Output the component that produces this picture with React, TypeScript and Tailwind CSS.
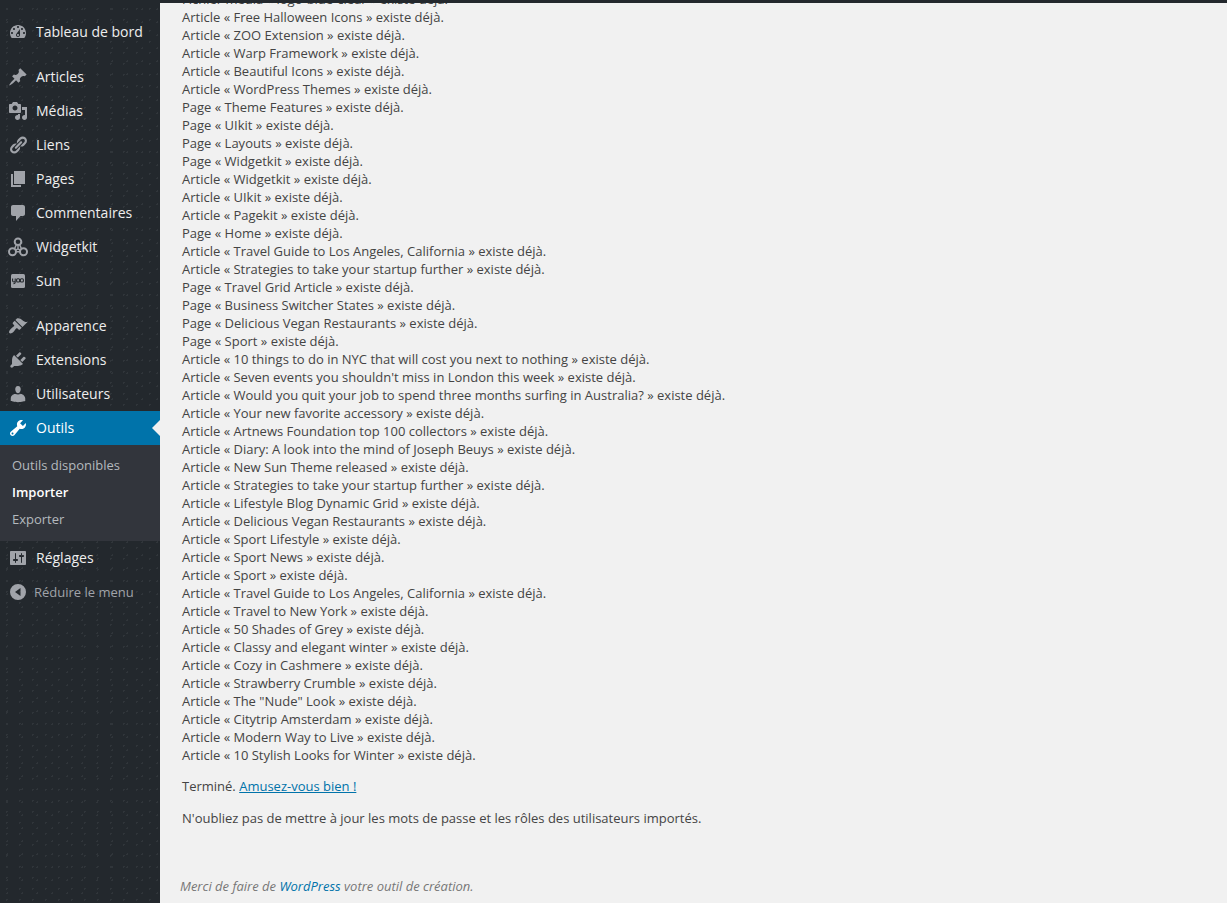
import React from "react";

type MenuItem = {
  label: string;
  icon: React.ReactNode;
  current?: boolean;
  separator?: boolean;
};

const Icon = ({ d }: { d: string }) => (
  <svg viewBox="0 0 20 20" className="size-full" fill="currentColor" fillRule="evenodd" aria-hidden="true">
    <path d={d} />
  </svg>
);

const menu: MenuItem[] = [
  {
    label: "Tableau de bord",
    icon: (
      <Icon d="M3.76 16h12.48c1.1-1.37 1.76-3.11 1.76-5 0-4.42-3.58-8-8-8s-8 3.58-8 8c0 1.89.66 3.63 1.76 5zM10 4c.55 0 1 .45 1 1s-.45 1-1 1-1-.45-1-1 .45-1 1-1zM6 6c.55 0 1 .45 1 1s-.45 1-1 1-1-.45-1-1 .45-1 1-1zm8 0c.55 0 1 .45 1 1s-.45 1-1 1-1-.45-1-1 .45-1 1-1zm-5.37 5.55L12 7v6c0 1.1-.9 2-2 2s-2-.9-2-2c0-.57.24-1.08.63-1.45zM4 10c.55 0 1 .45 1 1s-.45 1-1 1-1-.45-1-1 .45-1 1-1zm12 0c.55 0 1 .45 1 1s-.45 1-1 1-1-.45-1-1 .45-1 1-1zm-5 3c0-.55-.45-1-1-1s-1 .45-1 1 .45 1 1 1 1-.45 1-1z" />
    ),
  },
  {
    label: "Articles",
    separator: true,
    icon: (
      <Icon d="M10.44 3.02l1.82-1.82 6.36 6.35-1.83 1.82c-1.05-.68-2.48-.57-3.41.36l-.75.75c-.92.93-1.04 2.35-.35 3.41l-1.83 1.82-2.41-2.41-2.8 2.79c-.42.42-3.38 2.71-3.8 2.29s1.86-3.39 2.28-3.81l2.79-2.79L4.1 9.36l1.83-1.82c1.05.69 2.48.57 3.4-.36l.75-.75c.93-.92 1.05-2.35.36-3.41z" />
    ),
  },
  {
    label: "Médias",
    icon: (
      <Icon d="M13 11V4c0-.55-.45-1-1-1h-1.67L9 1H5L3.67 3H2c-.55 0-1 .45-1 1v7c0 .55.45 1 1 1h10c.55 0 1-.45 1-1zM7 4.5c1.38 0 2.5 1.12 2.5 2.5S8.38 9.5 7 9.5 4.5 8.38 4.5 7 5.62 4.5 7 4.5zM14 6h5v10.5c0 1.38-1.12 2.5-2.5 2.5S14 17.88 14 16.5s1.12-2.5 2.5-2.5c.17 0 .34.02.5.05V9h-3V6zm-4 8.05V13h2v3.5c0 1.38-1.12 2.5-2.5 2.5S7 17.88 7 16.5 8.12 14 9.5 14c.17 0 .34.02.5.05z" />
    ),
  },
  {
    label: "Liens",
    icon: (
      <Icon d="M17.74 2.76c1.68 1.69 1.68 4.41 0 6.1l-1.53 1.52c-1.12 1.12-2.7 1.47-4.14 1.09l2.62-2.61.76-.77.76-.76c.84-.84.84-2.2 0-3.04-.84-.85-2.2-.85-3.04 0l-.77.76-3.38 3.38c-.37-1.44-.02-3.02 1.1-4.14l1.52-1.53c1.69-1.68 4.42-1.68 6.1 0zM8.59 13.43l5.34-5.34c.42-.42.42-1.1 0-1.52-.44-.43-1.13-.39-1.53 0l-5.33 5.34c-.42.42-.42 1.1 0 1.52.44.43 1.13.39 1.52 0zm-.76 2.29l4.14-4.15c.38 1.44.03 3.02-1.09 4.14l-1.52 1.53c-1.69 1.68-4.41 1.68-6.1 0-1.68-1.68-1.68-4.42 0-6.1l1.53-1.52c1.12-1.12 2.7-1.47 4.14-1.1l-4.14 4.15c-.85.84-.85 2.2 0 3.05.84.84 2.2.84 3.04 0z" />
    ),
  },
  { label: "Pages", icon: <Icon d="M6 15V2h11v13H6zm-1 1h8v2H3V5h2v11z" /> },
  {
    label: "Commentaires",
    icon: (
      <Icon d="M5 2h10c1.1 0 2 .9 2 2v7c0 1.1-.9 2-2 2h-2.5l-4.5 5v-5H5c-1.1 0-2-.9-2-2V4c0-1.1.9-2 2-2z" />
    ),
  },
  {
    label: "Widgetkit",
    icon: (
      <svg viewBox="0 0 20 20" className="size-full" fill="none" stroke="currentColor" strokeWidth="2" aria-hidden="true">
        <circle cx="10" cy="4.8" r="3.3" />
        <circle cx="4.5" cy="14.8" r="3.5" />
        <circle cx="15.5" cy="14.8" r="3.5" />
        <path d="M8.2 8 6.6 11.6M11.8 8l1.6 3.6M8 14.8h4M10 8.4v3.4l-2.6 1.6M10 11.8l2.6 1.6" strokeWidth="1.4" />
      </svg>
    ),
  },
  {
    label: "Sun",
    icon: (
      <svg viewBox="0 0 20 20" className="size-full" fill="none" aria-hidden="true">
        <rect x="3" y="3" width="14" height="14" rx="1.5" fill="currentColor" />
        <path
          d="M4.6 7.4v2.4q0 1.2 1.3 1.2t1.3-1.2V7.4M7.2 9.8v1.8q0 1.2-1.8 1.2M9.6 7.8h1a1 1 0 0 1 1 1v1.2a1 1 0 0 1-1 1h-1a1 1 0 0 1-1-1V8.8a1 1 0 0 1 1-1zM13.4 7.8h1a1 1 0 0 1 1 1v1.2a1 1 0 0 1-1 1h-1a1 1 0 0 1-1-1V8.8a1 1 0 0 1 1-1z"
          stroke="#23282d"
          strokeWidth="1.1"
        />
      </svg>
    ),
  },
  {
    label: "Apparence",
    separator: true,
    icon: (
      <Icon d="M14.48 11.06L7.41 3.99l1.5-1.5c.5-.56 2.3-.47 3.51.32 1.21.8 1.43 1.28 2.91 2.1 1.18.64 2.45 1.26 4.45.85zm-.71.71L6.7 4.7 4.93 6.47c-.39.39-.39 1.02 0 1.41l1.06 1.06c.39.39.39 1.03 0 1.42-.6.6-1.43 1.11-2.21 1.69-.35.26-.7.53-1.01.84C1.43 14.23.4 16.08 1.4 17.07c.99 1 2.84-.03 4.18-1.36.31-.31.58-.66.85-1.02.57-.78 1.08-1.61 1.69-2.21.39-.39 1.02-.39 1.41 0l1.06 1.06c.39.39 1.02.39 1.41 0z" />
    ),
  },
  {
    label: "Extensions",
    icon: (
      <Icon d="M13.11 4.36L9.87 7.6 8 5.73l3.24-3.24c.35-.34 1.05-.2 1.56.32.52.51.66 1.21.31 1.55zm-8 1.77l.91-1.12 9.01 9.01-1.19.84c-.71.71-2.63 1.16-3.82 1.16H6.14L4.9 17.26c-.59.59-1.54.59-2.12 0-.59-.58-.59-1.53 0-2.12l1.24-1.24v-3.88c0-1.13.4-3.19 1.09-3.89zm7.26 3.97l3.24-3.24c.34-.35 1.04-.21 1.55.31.52.51.66 1.21.31 1.55l-3.24 3.25z" />
    ),
  },
  {
    label: "Utilisateurs",
    icon: (
      <Icon d="M10 9.25c-2.27 0-2.73-3.44-2.73-3.44C7 4.02 7.82 2 9.97 2c2.16 0 2.98 2.02 2.71 3.81 0 0-.41 3.44-2.68 3.44zm0 1.2L12.72 10c2.39 0 4.52 2.33 4.52 4.53v2.49s-3.65 1.13-7.24 1.13c-3.65 0-7.24-1.13-7.24-1.13v-2.49c0-2.25 1.94-4.48 4.47-4.48z" />
    ),
  },
  {
    label: "Outils",
    current: true,
    icon: (
      <Icon d="M16.68 9.77c-1.34 1.34-3.3 1.67-4.95.99l-5.41 6.52c-.99.99-2.59.99-3.58 0s-.99-2.59 0-3.57l6.52-5.42c-.68-1.65-.35-3.61.99-4.95 1.28-1.28 3.12-1.62 4.72-1.06l-2.89 2.89 2.82 2.82 2.86-2.87c.53 1.58.18 3.39-1.08 4.65zM3.81 16.21c.4.39 1.04.39 1.43 0 .4-.4.4-1.04 0-1.43-.39-.4-1.03-.4-1.43 0-.39.39-.39 1.03 0 1.43z" />
    ),
  },
  {
    label: "Réglages",
    icon: (
      <Icon d="M18 16V4c0-.55-.45-1-1-1H3c-.55 0-1 .45-1 1v12c0 .55.45 1 1 1h14c.55 0 1-.45 1-1zM8 11h1c.55 0 1 .45 1 1s-.45 1-1 1H8v1.5c0 .28-.22.5-.5.5s-.5-.22-.5-.5V13H6c-.55 0-1-.45-1-1s.45-1 1-1h1V5.5c0-.28.22-.5.5-.5s.5.22.5.5V11zm5-2h-1c-.55 0-1-.45-1-1s.45-1 1-1h1V5.5c0-.28.22-.5.5-.5s.5.22.5.5V7h1c.55 0 1 .45 1 1s-.45 1-1 1h-1v5.5c0 .28-.22.5-.5.5s-.5-.22-.5-.5V9z" />
    ),
  },
];

const submenu = ["Outils disponibles", "Importer", "Exporter"];

const imported: [string, string][] = [
  ["Fichier média", "logo-blue-clear"],
  ["Article", "Free Halloween Icons"],
  ["Article", "ZOO Extension"],
  ["Article", "Warp Framework"],
  ["Article", "Beautiful Icons"],
  ["Article", "WordPress Themes"],
  ["Page", "Theme Features"],
  ["Page", "UIkit"],
  ["Page", "Layouts"],
  ["Page", "Widgetkit"],
  ["Article", "Widgetkit"],
  ["Article", "UIkit"],
  ["Article", "Pagekit"],
  ["Page", "Home"],
  ["Article", "Travel Guide to Los Angeles, California"],
  ["Article", "Strategies to take your startup further"],
  ["Page", "Travel Grid Article"],
  ["Page", "Business Switcher States"],
  ["Page", "Delicious Vegan Restaurants"],
  ["Page", "Sport"],
  ["Article", "10 things to do in NYC that will cost you next to nothing"],
  ["Article", "Seven events you shouldn't miss in London this week"],
  ["Article", "Would you quit your job to spend three months surfing in Australia?"],
  ["Article", "Your new favorite accessory"],
  ["Article", "Artnews Foundation top 100 collectors"],
  ["Article", "Diary: A look into the mind of Joseph Beuys"],
  ["Article", "New Sun Theme released"],
  ["Article", "Strategies to take your startup further"],
  ["Article", "Lifestyle Blog Dynamic Grid"],
  ["Article", "Delicious Vegan Restaurants"],
  ["Article", "Sport Lifestyle"],
  ["Article", "Sport News"],
  ["Article", "Sport"],
  ["Article", "Travel Guide to Los Angeles, California"],
  ["Article", "Travel to New York"],
  ["Article", "50 Shades of Grey"],
  ["Article", "Classy and elegant winter"],
  ["Article", "Cozy in Cashmere"],
  ["Article", "Strawberry Crumble"],
  ["Article", 'The "Nude" Look'],
  ["Article", "Citytrip Amsterdam"],
  ["Article", "Modern Way to Live"],
  ["Article", "10 Stylish Looks for Winter"],
];

const Sidebar = () => (
  <nav className="w-40 shrink-0 bg-[#23282d] bg-[radial-gradient(circle,#30353a_1px,transparent_1px),radial-gradient(circle,#30353a_1px,transparent_1px)] bg-size-[13px_11px,15px_13px] pt-3 text-sm">
    <ul>
      {menu.map((item) => (
        <li key={item.label} className={item.separator ? "mt-[11px]" : ""}>
          <a
            href="#"
            className={
              item.current
                ? "relative flex h-[34px] items-center gap-2 bg-[#0073aa] pl-2 text-white"
                : "flex h-[34px] items-center gap-2 pl-2 text-[#eeeeee]"
            }
          >
            <span className={item.current ? "size-5 text-white" : "size-5 text-[#a0a3a9]"}>
              {item.icon}
            </span>
            {item.label}
            {item.current && (
              <span className="absolute top-1/2 right-0 -translate-y-1/2 border-8 border-l-0 border-transparent border-r-[#f1f1f1]" />
            )}
          </a>
          {item.current && (
            <ul className="bg-[#32353c] px-3 pt-[7px] pb-2 text-[13px] leading-[27px]">
              {submenu.map((name) => (
                <li key={name}>
                  <a
                    href="#"
                    className={name === "Importer" ? "font-semibold text-white" : "text-[#b4b9be]"}
                  >
                    {name}
                  </a>
                </li>
              ))}
            </ul>
          )}
        </li>
      ))}
      <li>
        <button
          type="button"
          className="flex h-[34px] w-full items-center gap-[6px] pl-2 text-[13px] text-[#a0a3a9]"
        >
          <span className="size-5">
            <Icon d="M10 2a8 8 0 1 0 0 16 8 8 0 0 0 0-16zM12.5 6v8L7 10z" />
          </span>
          Réduire le menu
        </button>
      </li>
    </ul>
  </nav>
);

const App = () => {
  return (
    <div className="flex h-screen flex-col overflow-hidden bg-[#f1f1f1] font-['Open_Sans',sans-serif] text-[13px] leading-[18px] text-[#444444]">
      <header className="h-[3px] shrink-0 bg-[#23282d]" />
      <div className="flex min-h-0 flex-1">
        <Sidebar />
        {/* the log is scrolled down to its end */}
        <div className="flex min-w-0 flex-1 flex-col justify-end overflow-hidden">
          <main className="pl-[22px]">
            <ul>
              {imported.map(([type, title], i) => (
                <li key={i}>
                  {type} « {title} » existe déjà.
                </li>
              ))}
            </ul>
            <p className="mt-[13px]">
              Terminé.{" "}
              <a href="#" className="text-[#0073aa] underline">
                Amusez-vous bien !
              </a>
            </p>
            <p className="mt-[14px]">
              N'oubliez pas de mettre à jour les mots de passe et les rôles des utilisateurs importés.
            </p>
          </main>
          <footer className="mt-[50px] pb-2 pl-5 text-[#777777] italic">
            Merci de faire de{" "}
            <a href="#" className="text-[#0073aa]">
              WordPress
            </a>{" "}
            votre outil de création.
          </footer>
        </div>
      </div>
    </div>
  );
};

export default App;
